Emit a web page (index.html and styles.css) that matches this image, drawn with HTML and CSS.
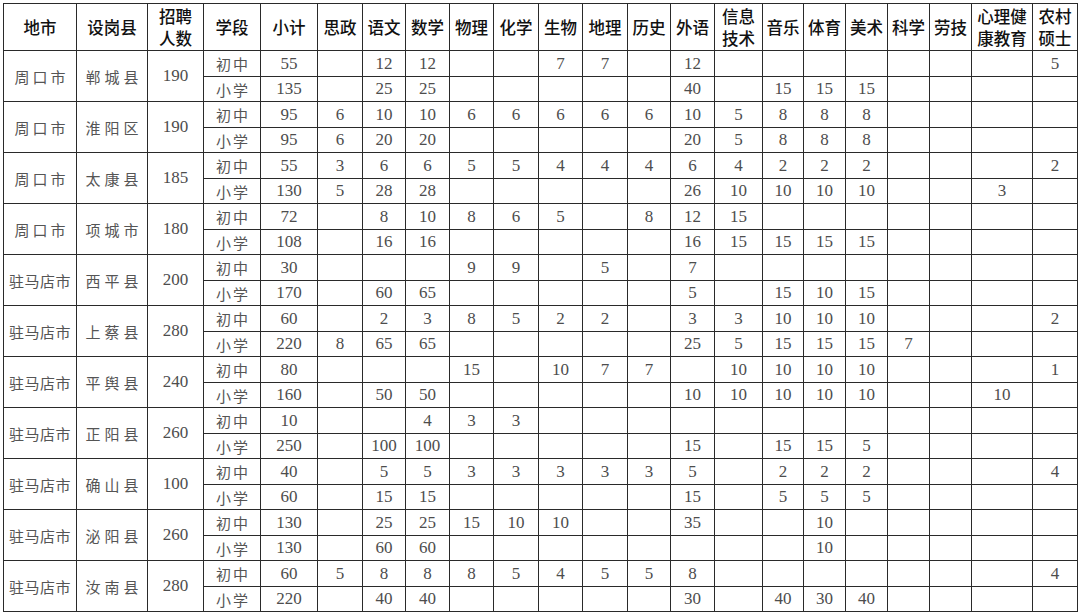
FILE: index.html
```html
<!DOCTYPE html>
<html lang="zh">
<head>
<meta charset="utf-8">
<title>招聘计划表</title>
<link rel="stylesheet" href="styles.css">
</head>
<body>
<div class="wrap">
<table class="plan">
<colgroup>
<col style="width:73px"><col style="width:71px"><col style="width:56px"><col style="width:57px"><col style="width:57px">
<col style="width:45px"><col style="width:43px"><col style="width:44px"><col style="width:44px"><col style="width:45px">
<col style="width:44px"><col style="width:45px"><col style="width:43px"><col style="width:44px"><col style="width:48px">
<col style="width:41px"><col style="width:42px"><col style="width:42px"><col style="width:42px"><col style="width:42px">
<col style="width:61px"><col style="width:45px">
</colgroup>
<thead>
<tr class="head">
<th>地市</th><th>设岗县</th><th><span class="ln">招聘</span><span class="ln">人数</span></th><th>学段</th><th>小计</th><th>思政</th><th>语文</th><th>数学</th><th>物理</th><th>化学</th><th>生物</th><th>地理</th><th>历史</th><th>外语</th><th><span class="ln">信息</span><span class="ln">技术</span></th><th>音乐</th><th>体育</th><th>美术</th><th>科学</th><th>劳技</th><th><span class="ln">心理健</span><span class="ln">康教育</span></th><th><span class="ln">农村</span><span class="ln">硕士</span></th>
</tr>
</thead>
<tbody>
<tr class="a"><td rowspan="2" class="city">周口市</td><td rowspan="2" class="county">郸城县</td><td rowspan="2" class="n">190</td><td class="stage">初中</td><td class="n">55</td><td></td><td class="n">12</td><td class="n">12</td><td></td><td></td><td class="n">7</td><td class="n">7</td><td></td><td class="n">12</td><td></td><td></td><td></td><td></td><td></td><td></td><td></td><td class="n">5</td></tr>
<tr class="b"><td class="stage">小学</td><td class="n">135</td><td></td><td class="n">25</td><td class="n">25</td><td></td><td></td><td></td><td></td><td></td><td class="n">40</td><td></td><td class="n">15</td><td class="n">15</td><td class="n">15</td><td></td><td></td><td></td><td></td></tr>

<tr class="a"><td rowspan="2" class="city">周口市</td><td rowspan="2" class="county">淮阳区</td><td rowspan="2" class="n">190</td><td class="stage">初中</td><td class="n">95</td><td class="n">6</td><td class="n">10</td><td class="n">10</td><td class="n">6</td><td class="n">6</td><td class="n">6</td><td class="n">6</td><td class="n">6</td><td class="n">10</td><td class="n">5</td><td class="n">8</td><td class="n">8</td><td class="n">8</td><td></td><td></td><td></td><td></td></tr>
<tr class="b"><td class="stage">小学</td><td class="n">95</td><td class="n">6</td><td class="n">20</td><td class="n">20</td><td></td><td></td><td></td><td></td><td></td><td class="n">20</td><td class="n">5</td><td class="n">8</td><td class="n">8</td><td class="n">8</td><td></td><td></td><td></td><td></td></tr>

<tr class="a"><td rowspan="2" class="city">周口市</td><td rowspan="2" class="county">太康县</td><td rowspan="2" class="n">185</td><td class="stage">初中</td><td class="n">55</td><td class="n">3</td><td class="n">6</td><td class="n">6</td><td class="n">5</td><td class="n">5</td><td class="n">4</td><td class="n">4</td><td class="n">4</td><td class="n">6</td><td class="n">4</td><td class="n">2</td><td class="n">2</td><td class="n">2</td><td></td><td></td><td></td><td class="n">2</td></tr>
<tr class="b"><td class="stage">小学</td><td class="n">130</td><td class="n">5</td><td class="n">28</td><td class="n">28</td><td></td><td></td><td></td><td></td><td></td><td class="n">26</td><td class="n">10</td><td class="n">10</td><td class="n">10</td><td class="n">10</td><td></td><td></td><td class="n">3</td><td></td></tr>

<tr class="a"><td rowspan="2" class="city">周口市</td><td rowspan="2" class="county">项城市</td><td rowspan="2" class="n">180</td><td class="stage">初中</td><td class="n">72</td><td></td><td class="n">8</td><td class="n">10</td><td class="n">8</td><td class="n">6</td><td class="n">5</td><td></td><td class="n">8</td><td class="n">12</td><td class="n">15</td><td></td><td></td><td></td><td></td><td></td><td></td><td></td></tr>
<tr class="b"><td class="stage">小学</td><td class="n">108</td><td></td><td class="n">16</td><td class="n">16</td><td></td><td></td><td></td><td></td><td></td><td class="n">16</td><td class="n">15</td><td class="n">15</td><td class="n">15</td><td class="n">15</td><td></td><td></td><td></td><td></td></tr>

<tr class="a"><td rowspan="2" class="city tight">驻马店市</td><td rowspan="2" class="county">西平县</td><td rowspan="2" class="n">200</td><td class="stage">初中</td><td class="n">30</td><td></td><td></td><td></td><td class="n">9</td><td class="n">9</td><td></td><td class="n">5</td><td></td><td class="n">7</td><td></td><td></td><td></td><td></td><td></td><td></td><td></td><td></td></tr>
<tr class="b"><td class="stage">小学</td><td class="n">170</td><td></td><td class="n">60</td><td class="n">65</td><td></td><td></td><td></td><td></td><td></td><td class="n">5</td><td></td><td class="n">15</td><td class="n">10</td><td class="n">15</td><td></td><td></td><td></td><td></td></tr>

<tr class="a"><td rowspan="2" class="city tight">驻马店市</td><td rowspan="2" class="county">上蔡县</td><td rowspan="2" class="n">280</td><td class="stage">初中</td><td class="n">60</td><td></td><td class="n">2</td><td class="n">3</td><td class="n">8</td><td class="n">5</td><td class="n">2</td><td class="n">2</td><td></td><td class="n">3</td><td class="n">3</td><td class="n">10</td><td class="n">10</td><td class="n">10</td><td></td><td></td><td></td><td class="n">2</td></tr>
<tr class="b"><td class="stage">小学</td><td class="n">220</td><td class="n">8</td><td class="n">65</td><td class="n">65</td><td></td><td></td><td></td><td></td><td></td><td class="n">25</td><td class="n">5</td><td class="n">15</td><td class="n">15</td><td class="n">15</td><td class="n">7</td><td></td><td></td><td></td></tr>

<tr class="a"><td rowspan="2" class="city tight">驻马店市</td><td rowspan="2" class="county">平舆县</td><td rowspan="2" class="n">240</td><td class="stage">初中</td><td class="n">80</td><td></td><td></td><td></td><td class="n">15</td><td></td><td class="n">10</td><td class="n">7</td><td class="n">7</td><td></td><td class="n">10</td><td class="n">10</td><td class="n">10</td><td class="n">10</td><td></td><td></td><td></td><td class="n">1</td></tr>
<tr class="b"><td class="stage">小学</td><td class="n">160</td><td></td><td class="n">50</td><td class="n">50</td><td></td><td></td><td></td><td></td><td></td><td class="n">10</td><td class="n">10</td><td class="n">10</td><td class="n">10</td><td class="n">10</td><td></td><td></td><td class="n">10</td><td></td></tr>

<tr class="a"><td rowspan="2" class="city tight">驻马店市</td><td rowspan="2" class="county">正阳县</td><td rowspan="2" class="n">260</td><td class="stage">初中</td><td class="n">10</td><td></td><td></td><td class="n">4</td><td class="n">3</td><td class="n">3</td><td></td><td></td><td></td><td></td><td></td><td></td><td></td><td></td><td></td><td></td><td></td><td></td></tr>
<tr class="b"><td class="stage">小学</td><td class="n">250</td><td></td><td class="n">100</td><td class="n">100</td><td></td><td></td><td></td><td></td><td></td><td class="n">15</td><td></td><td class="n">15</td><td class="n">15</td><td class="n">5</td><td></td><td></td><td></td><td></td></tr>

<tr class="a"><td rowspan="2" class="city tight">驻马店市</td><td rowspan="2" class="county">确山县</td><td rowspan="2" class="n">100</td><td class="stage">初中</td><td class="n">40</td><td></td><td class="n">5</td><td class="n">5</td><td class="n">3</td><td class="n">3</td><td class="n">3</td><td class="n">3</td><td class="n">3</td><td class="n">5</td><td></td><td class="n">2</td><td class="n">2</td><td class="n">2</td><td></td><td></td><td></td><td class="n">4</td></tr>
<tr class="b"><td class="stage">小学</td><td class="n">60</td><td></td><td class="n">15</td><td class="n">15</td><td></td><td></td><td></td><td></td><td></td><td class="n">15</td><td></td><td class="n">5</td><td class="n">5</td><td class="n">5</td><td></td><td></td><td></td><td></td></tr>

<tr class="a"><td rowspan="2" class="city tight">驻马店市</td><td rowspan="2" class="county">泌阳县</td><td rowspan="2" class="n">260</td><td class="stage">初中</td><td class="n">130</td><td></td><td class="n">25</td><td class="n">25</td><td class="n">15</td><td class="n">10</td><td class="n">10</td><td></td><td></td><td class="n">35</td><td></td><td></td><td class="n">10</td><td></td><td></td><td></td><td></td><td></td></tr>
<tr class="b"><td class="stage">小学</td><td class="n">130</td><td></td><td class="n">60</td><td class="n">60</td><td></td><td></td><td></td><td></td><td></td><td></td><td></td><td></td><td class="n">10</td><td></td><td></td><td></td><td></td><td></td></tr>

<tr class="a"><td rowspan="2" class="city tight">驻马店市</td><td rowspan="2" class="county">汝南县</td><td rowspan="2" class="n">280</td><td class="stage">初中</td><td class="n">60</td><td class="n">5</td><td class="n">8</td><td class="n">8</td><td class="n">8</td><td class="n">5</td><td class="n">4</td><td class="n">5</td><td class="n">5</td><td class="n">8</td><td></td><td></td><td></td><td></td><td></td><td></td><td></td><td class="n">4</td></tr>
<tr class="b"><td class="stage">小学</td><td class="n">220</td><td></td><td class="n">40</td><td class="n">40</td><td></td><td></td><td></td><td></td><td></td><td class="n">30</td><td></td><td class="n">40</td><td class="n">30</td><td class="n">40</td><td></td><td></td><td></td><td></td></tr>
</tbody>
</table>
</div>
</body>
</html>
```

FILE: styles.css
```css
html, body {
  margin: 0;
  padding: 0;
  background: #ffffff;
}

.wrap {
  padding: 3px 0 0 3px;
}

.plan {
  border-collapse: collapse;
  table-layout: fixed;
  width: 1074px;
  font-family: "Noto Sans CJK SC", "Noto Sans", sans-serif;
}

.plan th,
.plan td {
  border: 1.5px solid #2a2a2a;
  padding: 0;
  text-align: center;
  vertical-align: middle;
  overflow: hidden;
  white-space: nowrap;
}

.plan th {
  height: 46px;
  font-size: 16.5px;
  line-height: 20px;
  font-weight: 500;
  color: #111111;
  letter-spacing: 0;
}

.plan th .ln {
  display: block;
  height: 22px;
  line-height: 22px;
}

.plan tr.a td {
  height: 25px;
}

.plan tr.b td {
  height: 24px;
}

.plan td.n {
  font-family: "Liberation Serif", "Times New Roman", serif;
  font-size: 17px;
  color: #4d4d4d;
}

.plan td.city {
  font-size: 15px;
  color: #555555;
  letter-spacing: 3px;
  padding-left: 3px;
}

.plan td.city.tight {
  letter-spacing: 0.5px;
  padding-left: 0;
}

.plan td.county {
  font-size: 15px;
  color: #555555;
  letter-spacing: 4px;
  padding-left: 4px;
}

.plan td.stage {
  font-size: 15px;
  color: #555555;
  letter-spacing: 2px;
  padding-left: 2px;
}
```
